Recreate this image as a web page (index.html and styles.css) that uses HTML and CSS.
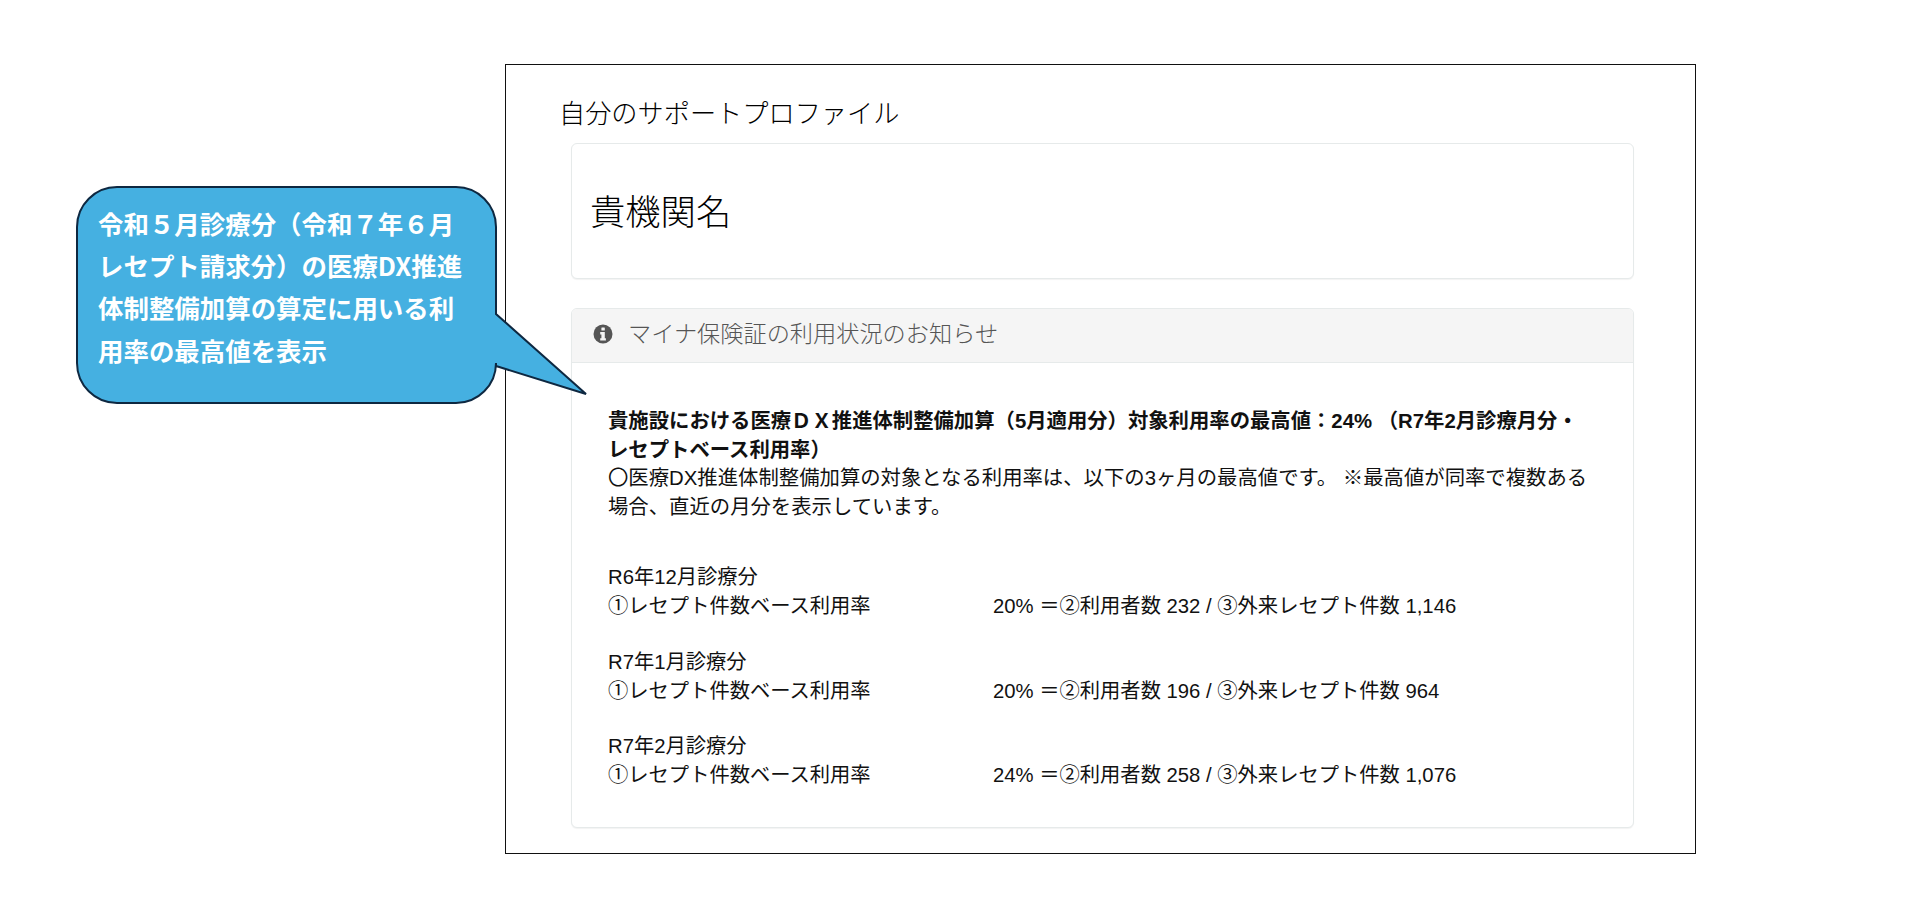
FILE: index.html
```html
<!DOCTYPE html>
<html lang="ja">
<head>
<meta charset="utf-8">
<title>自分のサポートプロファイル</title>
<link rel="stylesheet" href="styles.css">
</head>
<body>
<main class="frame">
  <h1 class="page-title">自分のサポートプロファイル</h1>
  <section class="card name-card">
    <h2 class="org-name">貴機関名</h2>
  </section>
  <section class="card notice-card">
    <header class="notice-head">
      <svg class="info-icon" viewBox="0 0 20 20" aria-hidden="true">
        <circle cx="10" cy="10" r="9.5" fill="#555"/>
        <rect x="8.4" y="3.4" width="3.4" height="3" rx=".5" fill="#f5f5f5"/>
        <path d="M7.2 8h4.6v6.2h1.1v2.4H7.2v-2.4h1.2v-3.8H7.2z" fill="#f5f5f5"/>
      </svg>
      <span>マイナ保険証の利用状況のお知らせ</span>
    </header>
    <div class="notice-body">
      <p class="lead"><strong>貴施設における医療ＤＸ推進体制整備加算（5月適用分）対象利用率の最高値：24% （R7年2月診療月分・レセプトベース利用率）</strong><br>〇医療DX推進体制整備加算の対象となる利用率は、以下の3ヶ月の最高値です。 ※最高値が同率で複数ある場合、直近の月分を表示しています。</p>
      <div class="month">
        <div>R6年12月診療分</div>
        <div class="rate-row"><span class="rate-label">①レセプト件数ベース利用率</span><span>20% ＝②利用者数 232 / ③外来レセプト件数 1,146</span></div>
      </div>
      <div class="month">
        <div>R7年1月診療分</div>
        <div class="rate-row"><span class="rate-label">①レセプト件数ベース利用率</span><span>20% ＝②利用者数 196 / ③外来レセプト件数 964</span></div>
      </div>
      <div class="month">
        <div>R7年2月診療分</div>
        <div class="rate-row"><span class="rate-label">①レセプト件数ベース利用率</span><span>24% ＝②利用者数 258 / ③外来レセプト件数 1,076</span></div>
      </div>
    </div>
  </section>
</main>
<aside class="callout">
  <svg class="callout-shape" viewBox="0 0 516 220" aria-hidden="true">
    <path d="M41 1H380A40 40 0 0 1 420 41V128L510 208L420 180V177A40 40 0 0 1 380 217H41A40 40 0 0 1 1 177V41A40 40 0 0 1 41 1Z" fill="#45b0e1" stroke="#0e2841" stroke-width="2" stroke-linejoin="miter"/>
  </svg>
  <p class="callout-text">令和５月診療分（令和７年６月レセプト請求分）の医療DX推進体制整備加算の算定に用いる利用率の最高値を表示</p>
</aside>
</body>
</html>
```

FILE: styles.css
```css
* { box-sizing: border-box; }
html, body { margin: 0; background: #fff; }
body {
  height: 917px;
  overflow: hidden;
  padding: 64px 0 0 505px;
  font-family: "Liberation Sans", "Noto Sans CJK JP", sans-serif;
  color: #111;
  position: relative;
}
.frame {
  width: 1191px;
  height: 790px;
  border: 1px solid #111;
  padding: 31px 54px 0 54px;
}
.page-title {
  margin: 0 0 11px -1px;
  font-size: 26.2px;
  line-height: 36px;
  font-weight: 300;
  color: #000;
}
.card {
  margin-left: 11px;
  width: 1063px;
  background: #fff;
  border: 1px solid #e6eaea;
  border-radius: 6px;
  box-shadow: 0 1px 1px rgba(0, 0, 0, .05);
}
.name-card {
  height: 136px;
  margin-bottom: 29px;
  padding: 5px 18px 0;
  display: flex;
  align-items: center;
}
.org-name {
  margin: 0;
  font-size: 35.3px;
  font-weight: 300;
  line-height: 1.2;
  color: #000;
}
.notice-card { height: 520px; overflow: hidden; }
.notice-head {
  height: 54px;
  padding: 0 21px 7px;
  display: flex;
  align-items: center;
  gap: 15px;
  background: #f5f5f5;
  border-bottom: 1px solid #e6eaea;
  color: #555;
  font-size: 23.2px;
  font-weight: 300;
}
.info-icon { width: 20px; height: 20px; flex: none; margin-top: 3px; }
.notice-body {
  padding: 44px 40px 0 36px;
  font-size: 20.3px;
  line-height: 29px;
}
.lead { margin: 0 0 42.3px; line-height: 28.5px; font-size: 20.38px; }
.lead strong { font-weight: 700; font-size: 20.35px; }
.month { margin-bottom: 26.5px; }
.rate-row { display: flex; }
.rate-label { width: 385px; flex: none; }
.callout {
  position: absolute;
  left: 76px;
  top: 186px;
  width: 516px;
  height: 220px;
}
.callout-shape { position: absolute; inset: 0; width: 516px; height: 220px; }
.callout-text {
  position: relative;
  margin: 0;
  width: 370px;
  padding: 16px 0 0 22px;
  box-sizing: content-box;
  color: #fff;
  font-family: "Noto Sans CJK JP", sans-serif;
  font-weight: 700;
  font-size: 25.45px;
  line-height: 42.2px;
}
```
